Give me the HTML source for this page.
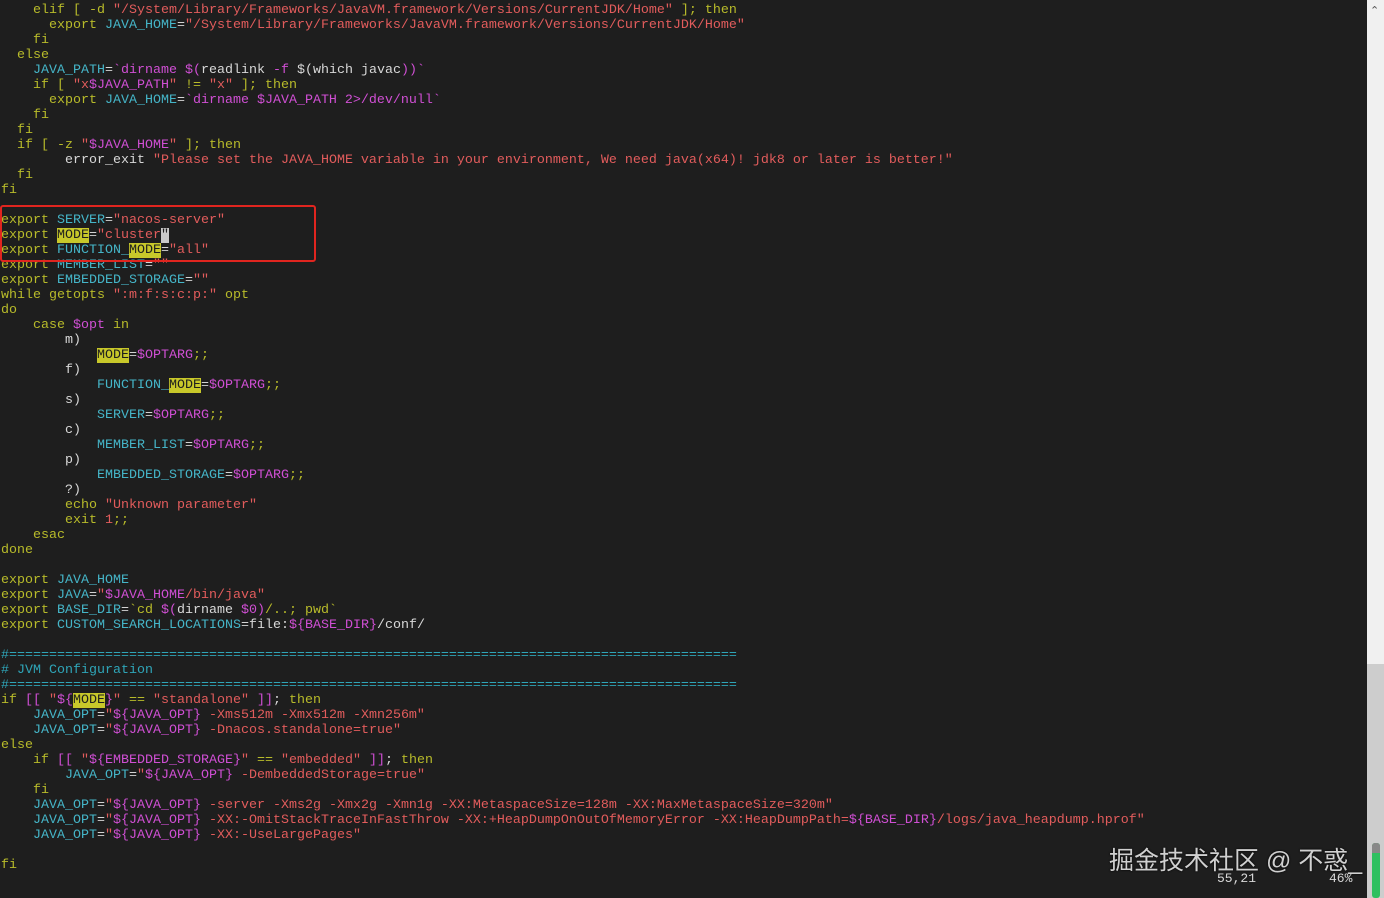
<!DOCTYPE html>
<html><head><meta charset="utf-8">
<style>
html,body{margin:0;padding:0;background:#1e1e1e;width:1384px;height:898px;overflow:hidden;position:relative}
pre{position:absolute;left:1px;top:3px;margin:0;font-family:"Liberation Mono",monospace;font-size:13.33px;line-height:15px;color:#d4d4d4;white-space:pre}
.k{color:#b8bb2a}.v{color:#45b5c8}.s{color:#e25c5c}.m{color:#d04fd4}.w{color:#d8d8d8}.c{color:#2fa5b8}
.h{background:#c8c82a;color:#1e1e1e}.cur{background:#c8c8c8;color:#1e1e1e}
.box{position:absolute;left:0;top:205px;width:312px;height:53px;border:2px solid #e0251f;border-radius:3px}
.sb{position:absolute;left:1367px;top:0;width:17px;height:898px;background:#f0f0f0}
.sb2{position:absolute;left:1367px;top:664px;width:17px;height:234px;background:#cdcdcd}
.thumb{position:absolute;left:1372px;top:843px;width:8px;height:55px;background:#2ec060;border-radius:3px}
.thumbtop{position:absolute;left:1372px;top:843px;width:8px;height:10px;background:#888;border-radius:3px 3px 0 0}
.arrow{position:absolute;left:1370px;top:4px;color:#555;font-size:11px;font-family:"DejaVu Sans",sans-serif}
.wm{position:absolute;left:1109px;top:841px;font-family:"Liberation Sans","Noto Sans CJK SC",sans-serif;font-size:25px;color:#d0d0d0;text-shadow:0 0 2px #000}
.st{position:absolute;top:871px;font-family:"Liberation Mono",monospace;font-size:13px;color:#d8d8d8}
</style></head><body>
<pre><span class="k">    elif</span> <span class="k">[</span> <span class="k">-d</span> <span class="s">"/System/Library/Frameworks/JavaVM.framework/Versions/CurrentJDK/Home"</span> <span class="k">];</span> <span class="k">then</span>
<span class="k">      export</span> <span class="v">JAVA_HOME</span>=<span class="s">"/System/Library/Frameworks/JavaVM.framework/Versions/CurrentJDK/Home"</span>
<span class="k">    fi</span>
<span class="k">  else</span>
    <span class="v">JAVA_PATH</span>=<span class="m">`dirname $(</span><span class="w">readlink</span> <span class="m">-f</span> <span class="w">$(</span><span class="w">which javac</span><span class="m">))`</span>
<span class="k">    if</span> <span class="k">[</span> <span class="s">"x</span><span class="m">$JAVA_PATH</span><span class="s">"</span> <span class="k">!=</span> <span class="s">"x"</span> <span class="k">];</span> <span class="k">then</span>
<span class="k">      export</span> <span class="v">JAVA_HOME</span>=<span class="m">`dirname $JAVA_PATH 2&gt;/dev/null`</span>
<span class="k">    fi</span>
<span class="k">  fi</span>
<span class="k">  if</span> <span class="k">[</span> <span class="k">-z</span> <span class="s">"</span><span class="m">$JAVA_HOME</span><span class="s">"</span> <span class="k">];</span> <span class="k">then</span>
        <span class="w">error_exit</span> <span class="s">"Please set the JAVA_HOME variable in your environment, We need java(x64)! jdk8 or later is better!"</span>
<span class="k">  fi</span>
<span class="k">fi</span>

<span class="k">export</span> <span class="v">SERVER</span>=<span class="s">"nacos-server"</span>
<span class="k">export</span> <span class="h">MODE</span>=<span class="s">"cluster</span><span class="cur">"</span>
<span class="k">export</span> <span class="v">FUNCTION_</span><span class="h">MODE</span>=<span class="s">"all"</span>
<span class="k">export</span> <span class="v">MEMBER_LIST</span>=<span class="s">""</span>
<span class="k">export</span> <span class="v">EMBEDDED_STORAGE</span>=<span class="s">""</span>
<span class="k">while</span> <span class="k">getopts</span> <span class="s">":m:f:s:c:p:"</span> <span class="k">opt</span>
<span class="k">do</span>
<span class="k">    case</span> <span class="m">$opt</span> <span class="k">in</span>
        <span class="w">m)</span>
            <span class="h">MODE</span>=<span class="m">$OPTARG</span><span class="k">;;</span>
        <span class="w">f)</span>
            <span class="v">FUNCTION_</span><span class="h">MODE</span>=<span class="m">$OPTARG</span><span class="k">;;</span>
        <span class="w">s)</span>
            <span class="v">SERVER</span>=<span class="m">$OPTARG</span><span class="k">;;</span>
        <span class="w">c)</span>
            <span class="v">MEMBER_LIST</span>=<span class="m">$OPTARG</span><span class="k">;;</span>
        <span class="w">p)</span>
            <span class="v">EMBEDDED_STORAGE</span>=<span class="m">$OPTARG</span><span class="k">;;</span>
        <span class="w">?)</span>
        <span class="k">echo</span> <span class="s">"Unknown parameter"</span>
        <span class="k">exit</span> <span class="s">1</span><span class="k">;;</span>
<span class="k">    esac</span>
<span class="k">done</span>

<span class="k">export</span> <span class="v">JAVA_HOME</span>
<span class="k">export</span> <span class="v">JAVA</span>=<span class="s">"</span><span class="m">$JAVA_HOME</span><span class="s">/bin/java"</span>
<span class="k">export</span> <span class="v">BASE_DIR</span>=<span class="k">`cd</span> <span class="m">$(</span><span class="w">dirname</span> <span class="m">$0</span><span class="m">)</span><span class="k">/..; pwd`</span>
<span class="k">export</span> <span class="v">CUSTOM_SEARCH_LOCATIONS</span>=<span class="w">file:</span><span class="m">${BASE_DIR}</span><span class="w">/conf/</span>

<span class="c">#===========================================================================================</span>
<span class="c"># JVM Configuration</span>
<span class="c">#===========================================================================================</span>
<span class="k">if</span> <span class="m">[[</span> <span class="s">"</span><span class="m">${</span><span class="h">MODE</span><span class="m">}</span><span class="s">"</span> <span class="k">==</span> <span class="s">"standalone"</span> <span class="m">]]</span><span class="w">;</span> <span class="k">then</span>
    <span class="v">JAVA_OPT</span>=<span class="s">"</span><span class="m">${JAVA_OPT}</span><span class="s"> -Xms512m -Xmx512m -Xmn256m"</span>
    <span class="v">JAVA_OPT</span>=<span class="s">"</span><span class="m">${JAVA_OPT}</span><span class="s"> -Dnacos.standalone=true"</span>
<span class="k">else</span>
<span class="k">    if</span> <span class="m">[[</span> <span class="s">"</span><span class="m">${EMBEDDED_STORAGE}</span><span class="s">"</span> <span class="k">==</span> <span class="s">"embedded"</span> <span class="m">]]</span><span class="w">;</span> <span class="k">then</span>
        <span class="v">JAVA_OPT</span>=<span class="s">"</span><span class="m">${JAVA_OPT}</span><span class="s"> -DembeddedStorage=true"</span>
<span class="k">    fi</span>
    <span class="v">JAVA_OPT</span>=<span class="s">"</span><span class="m">${JAVA_OPT}</span><span class="s"> -server -Xms2g -Xmx2g -Xmn1g -XX:MetaspaceSize=128m -XX:MaxMetaspaceSize=320m"</span>
    <span class="v">JAVA_OPT</span>=<span class="s">"</span><span class="m">${JAVA_OPT}</span><span class="s"> -XX:-OmitStackTraceInFastThrow -XX:+HeapDumpOnOutOfMemoryError -XX:HeapDumpPath=</span><span class="m">${BASE_DIR}</span><span class="s">/logs/java_heapdump.hprof"</span>
    <span class="v">JAVA_OPT</span>=<span class="s">"</span><span class="m">${JAVA_OPT}</span><span class="s"> -XX:-UseLargePages"</span>

<span class="k">fi</span></pre>
<div class="box"></div>
<div class="sb"></div><div class="sb2"></div>
<div class="thumb"></div><div class="thumbtop"></div>
<div class="arrow">&#8963;</div>
<div class="wm">掘金技术社区 @ 不惑_</div>
<div class="st" style="left:1217px">55,21</div>
<div class="st" style="left:1329px">46%</div>
</body></html>
